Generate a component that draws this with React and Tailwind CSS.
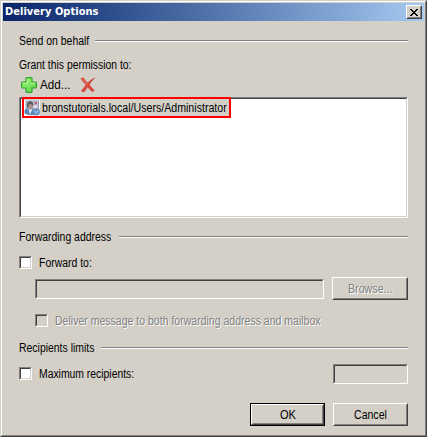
function Narrow({ width, scale = "scale-x-[.87]", className = "", children }) {
  return (
    <span className={`block h-4 shrink-0 text-left leading-4 ${width} ${className}`}>
      <span className={`inline-block origin-left whitespace-nowrap ${scale}`}>{children}</span>
    </span>
  );
}

function Section({ title, width, scale, className }) {
  return (
    <div className={`flex h-4 items-center ${className}`}>
      <h2>
        <Narrow width={width} scale={scale}>{title}</Narrow>
      </h2>
      <div className="h-[2px] flex-1 border-t border-[#808080] bg-white" />
    </div>
  );
}

function Well({ className, fill = "", children }) {
  return (
    <div className={`shrink-0 border border-t-[#808080] border-l-[#808080] border-r-white border-b-white ${className}`}>
      <div className={`h-full w-full border border-t-[#404040] border-l-[#404040] border-r-[#d4d0c8] border-b-[#d4d0c8] ${fill}`}>
        {children}
      </div>
    </div>
  );
}

function Button({ className, children, disabled }) {
  return (
    <button
      disabled={disabled}
      className={`shrink-0 border border-t-white border-l-white border-r-[#404040] border-b-[#404040] ${className}`}
    >
      <span className="flex h-full w-full items-center justify-center border border-t-[#d4d0c8] border-l-[#d4d0c8] border-r-[#808080] border-b-[#808080]">
        {children}
      </span>
    </button>
  );
}

function PlusIcon() {
  return (
    <svg width="16" height="16" viewBox="0 0 16 16" className="shrink-0">
      <defs>
        <linearGradient id="plus" x1="0" y1="0" x2="1" y2="1">
          <stop offset="0" stopColor="#a4ee7c" />
          <stop offset="0.5" stopColor="#7ee563" />
          <stop offset="1" stopColor="#4fd044" />
        </linearGradient>
      </defs>
      <path d="M5 1.500Q5 .6 5.900.6h4.200q.9 0 .9.9V5h3.500q.9 0 .9.900v4.200q0 .9-.9.900H11v3.500q0 .9-.9.900H5.900q-.9 0-.9-.9V11H1.500q-.9 0-.9-.9V5.900q0-.9.9-.9H5z" fill="url(#plus)" stroke="#2aa526" strokeWidth="1.200" />
      <path d="M6.400 2v4.400H2M9.600 6.400H14" fill="none" stroke="#c8f8ac" strokeWidth=".8" />
    </svg>
  );
}

function DeleteIcon() {
  return (
    <svg width="16" height="16" viewBox="0 0 16 16" className="shrink-0">
      <path d="M1 1.700 3.400.8Q5.300 4 7.800 6.100 10.800 2.500 14.600 1 11.300 4 9.300 7.500 11.200 10.600 14.300 13.500L12 14.500Q9.500 12.500 7.700 9.800 5.500 13 3.900 15L1.400 14Q4 11 6.200 7.800 3 5 1 1.700Z" fill="#dd4638" stroke="#c93d30" strokeWidth=".6" />
      <path d="M2.500 1.900Q5 5.200 7.600 7.300" fill="none" stroke="#f39a88" strokeWidth=".8" />
    </svg>
  );
}

function MailUserIcon() {
  return (
    <svg width="16" height="16" viewBox="0 0 16 16" className="shrink-0 bg-white">
      <rect x="2" y="1" width="12.500" height="9" fill="#c9cede" stroke="#9299ad" />
      <rect x="10.500" y="2" width="2.500" height="2.500" fill="#bd6276" />
      <path d="M10 6.500h3" stroke="#edf0f5" />
      <path d="M.5 13.500V10Q1.500 8.500 4 8.500h5q2 0 2.500 1.500v4.500Q5 16.500.5 13.500Z" fill="#5b87b8" />
      <path d="M4.500 9 6 14.500 8.500 9Z" fill="#dce8f4" />
      <ellipse cx="6.500" cy="6" rx="2.600" ry="3.500" fill="#aa9088" />
      <path d="M3.300 8Q1.800 1.500 6 1.200 10 1.200 9.200 6 7.500 3.500 5.600 3.700 4.300 4.500 4 8Z" fill="#55565e" />
      <rect x="9" y="9" width="6.500" height="6" rx="2" fill="#6f9bcb" stroke="#4d79a9" strokeWidth=".7" />
      <path d="m9.500 10.500 2.700 2 3-2" fill="none" stroke="#b9d3eb" strokeWidth=".8" />
    </svg>
  );
}

export default function App() {
  return (
    <div className="h-[437px] w-[427px] border border-t-[#d4d0c8] border-l-[#d4d0c8] border-r-[#404040] border-b-[#404040] bg-[#d4d0c8] font-['Liberation_Sans',Arial,sans-serif] text-[12px] text-black">
      <div className="h-full w-full border border-t-white border-l-white border-r-[#808080] border-b-[#808080] p-px">
        <header className="flex h-[18px] items-center justify-between bg-linear-to-r from-[#0a246a] to-[#a6caf0] pr-[2px] pl-[2px]">
          <h1 className="font-['DejaVu_Sans_Condensed','DejaVu_Sans',sans-serif] text-[11px] leading-[18px] font-bold tracking-[0.03px] text-white">
            Delivery Options
          </h1>
          <Button className="h-[14px] w-4 bg-[#d4d0c8]">
            <svg width="8" height="7" viewBox="0 0 8 7" shapeRendering="crispEdges">
              <path d="M0 0h2v1h1v1h2V1h1V0h2v1H7v1H6v1H5v1h1v1h1v1h1v1H6V6H5V5H3v1H2v1H0V6h1V5h1V4h1V3H2V2H1V1H0z" />
            </svg>
          </Button>
        </header>

        <main className="px-4">
          <Section title="Send on behalf" className="mt-[12px]" width="w-[76px]" />
          <p className="mt-[8px]">
            <Narrow width="w-[112px]" scale="scale-x-[.865]">Grant this permission to:</Narrow>
          </p>
          <div className="mt-[4px] flex h-4 items-center pl-[2px]">
            <PlusIcon />
            <Narrow width="w-[40px]" scale="scale-x-[.97]" className="ml-[3px]">Add...</Narrow>
            <DeleteIcon />
          </div>
          <Well className="mt-[4px] h-[121px]" fill="bg-white">
            <div className="-mt-[2px] ml-px flex h-[21px] w-[209px] items-center border-2 border-[#fe0000] bg-[#d4d0c8]">
              <MailUserIcon />
              <Narrow width="w-[186px]" scale="scale-x-[.885]" className="ml-[2px]">
                bronstutorials.local/Users/Administrator
              </Narrow>
            </div>
          </Well>

          <Section title="Forwarding address" className="mt-[11px]" width="w-[100px]" />
          <div className="mt-[11px] flex h-[13px] items-center gap-[7px]">
            <Well className="h-[13px] w-[13px]" fill="bg-white" />
            <Narrow width="w-[60px]">Forward to:</Narrow>
          </div>
          <div className="mt-2 flex h-[23px] items-center justify-between pl-4">
            <Well className="h-5 w-[289px]" />
            <Button className="h-[23px] w-[76px]" disabled>
              <Narrow width="w-[44px]" scale="scale-x-[.89]" className="text-[#808080] [text-shadow:1px_1px_0_white]">
                Browse...
              </Narrow>
            </Button>
          </div>
          <div className="mt-[14px] flex h-[13px] items-center gap-[7px] pl-4">
            <Well className="h-[13px] w-[13px]" />
            <Narrow width="w-[266px]" scale="scale-x-[.877]" className="text-[#808080] [text-shadow:1px_1px_0_white]">
              Deliver message to both forwarding address and mailbox
            </Narrow>
          </div>

          <Section title="Recipients limits" className="mt-[13px]" width="w-[82px]" />
          <div className="mt-[7px] flex h-[21px] items-center justify-between">
            <div className="flex items-center gap-[7px]">
              <Well className="h-[13px] w-[13px]" fill="bg-white" />
              <Narrow width="w-[96px]" scale="scale-x-[.865]">Maximum recipients:</Narrow>
            </div>
            <Well className="h-5 w-[75px]" />
          </div>

          <footer className="mt-[19px] flex justify-end gap-2">
            <div className="h-[23px] w-[75px] border border-black">
              <Button className="h-full w-full">
                <Narrow width="w-4" scale="scale-x-[.92]">OK</Narrow>
              </Button>
            </div>
            <Button className="h-[23px] w-[75px]">
              <Narrow width="w-[33px]" scale="scale-x-[.88]">Cancel</Narrow>
            </Button>
          </footer>
        </main>
      </div>
    </div>
  );
}
